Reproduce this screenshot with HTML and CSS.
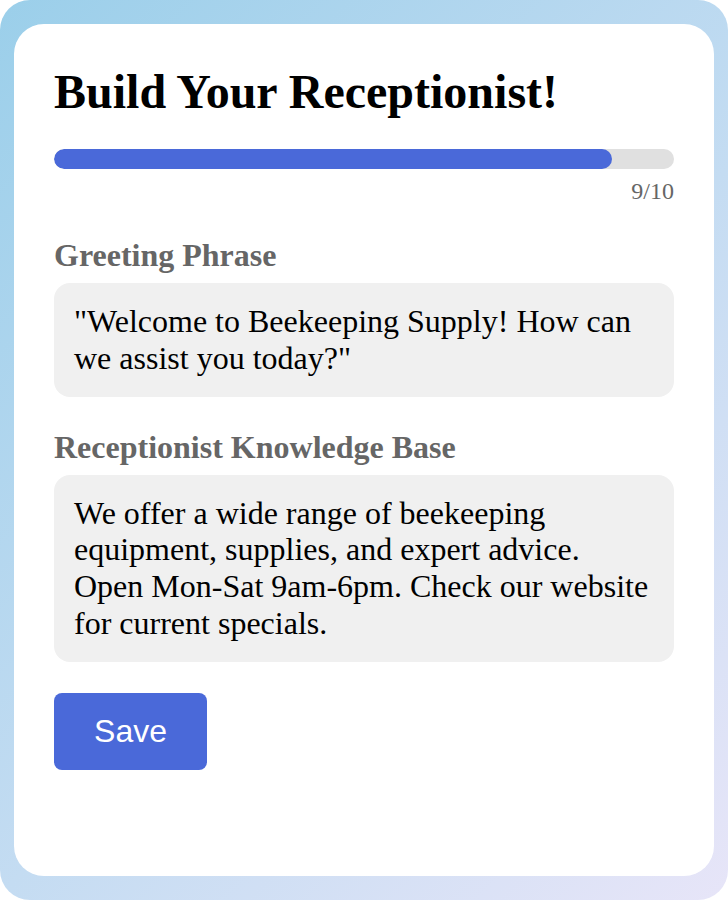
FILE: index.html
```html
<!DOCTYPE html>
<html lang="en">
<head>
    <meta charset="UTF-8">
    <title>Build Your Receptionist</title>
    <link rel="stylesheet" href="styles.css">
</head>
<body>
<div class="page">
    <div class="card">
        <h1 class="title">Build Your Receptionist!</h1>
        <div class="progress">
            <div class="progress-fill" style="width: 90%"></div>
        </div>
        <div class="progress-count">9/10</div>

        <div class="field">
            <div class="field-label">Greeting Phrase</div>
            <div class="field-box">"Welcome to Beekeeping Supply! How can we assist you today?"</div>
        </div>

        <div class="field">
            <div class="field-label">Receptionist Knowledge Base</div>
            <div class="field-box">We offer a wide range of beekeeping equipment, supplies, and expert advice. Open Mon-Sat 9am-6pm. Check our website for current specials.</div>
        </div>

        <button class="save-btn">Save</button>
    </div>
</div>
</body>
</html>
```

FILE: styles.css
```css
html, body {
    margin: 0;
    padding: 0;
}

body {
    font-family: "Liberation Serif", "Times New Roman", serif;
}

.page {
    box-sizing: border-box;
    width: 728px;
    height: 900px;
    padding: 24px 14px;
    border-radius: 30px;
    background: linear-gradient(135deg, #9bcfea 0%, #c4dcf2 55%, #e7e5f8 100%);
}

.card {
    box-sizing: border-box;
    height: 100%;
    background: #fff;
    border-radius: 30px;
    padding: 40px 40px;
}

.title {
    margin: 0;
    font-size: 48px;
    line-height: 56px;
    font-weight: bold;
    color: #000;
}

.progress {
    margin-top: 29px;
    height: 20px;
    background: #e0e0e0;
    border-radius: 10px;
    overflow: hidden;
}

.progress-fill {
    height: 100%;
    background: #4a69d9;
    border-radius: 10px;
}

.progress-count {
    margin-top: 8px;
    text-align: right;
    font-size: 24px;
    line-height: 28px;
    color: #666;
}

.field {
    margin-top: 31px;
}

.field-label {
    font-size: 32px;
    line-height: 38px;
    font-weight: bold;
    color: #666;
    margin-bottom: 9px;
}

.field-box {
    background: #f0f0f0;
    border-radius: 16px;
    padding: 20px;
    font-size: 32px;
    line-height: 36.8px;
    color: #000;
}

.save-btn {
    display: block;
    margin-top: 31px;
    width: 153px;
    height: 77px;
    border: none;
    border-radius: 8px;
    background: #4a69d9;
    color: #fff;
    font-family: "Liberation Sans", Arial, sans-serif;
    font-size: 32px;
    cursor: pointer;
}
```
